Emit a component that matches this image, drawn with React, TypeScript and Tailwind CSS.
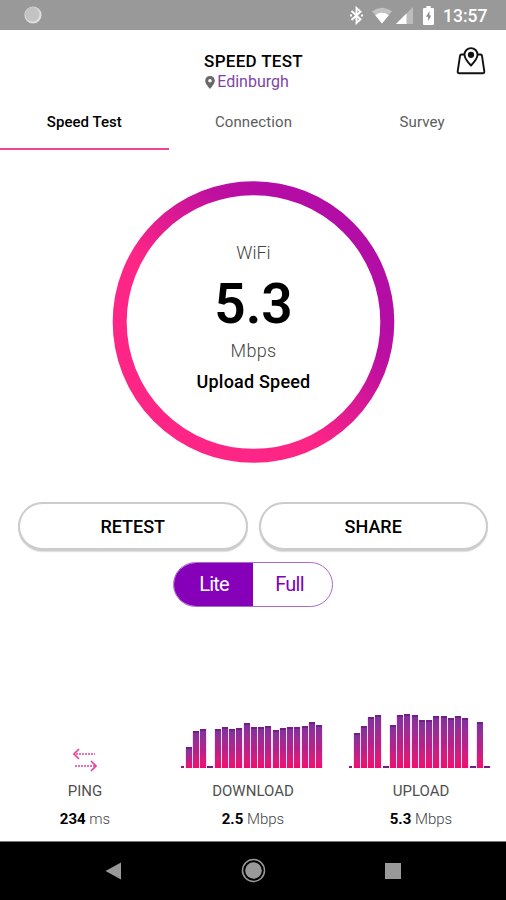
import React from 'react';

const downloadBars = [21, 37, 39, 2, 39, 41, 39.5, 40, 45.5, 41, 41, 42, 38, 40, 41.5, 41, 42.5, 46, 43];
const uploadBars = [35, 42, 51.5, 53.5, 2, 43.5, 53.5, 54.5, 53.5, 48, 48, 52, 52, 50, 52, 50, 2, 46.5, 2];

const StatusBar: React.FC = () => (
  <div className="h-[30px] bg-[#999999] flex items-center justify-between pl-6 pr-[18px]">
    <svg width="18" height="18" viewBox="0 0 18 18">
      <circle cx="9" cy="9" r="8.6" fill="#dedede" />
      <circle cx="8.3" cy="8.3" r="7.2" fill="#c3c3c3" />
    </svg>
    <div className="flex items-center text-white">
      <svg width="13" height="19" viewBox="0 0 13 19" fill="none" stroke="white" strokeWidth="1.9">
        <path d="M1.5 5 L10.5 13.3 L6.5 17 V2 L10.5 5.7 L1.5 14" />
        <path d="M0 9.5h2M11 9.5h2" />
      </svg>
      <svg className="ml-[9px]" width="20" height="17" viewBox="0 0 21 17">
        <path d="M0 4 Q10.5 -3.5 21 4 L10.5 17 Z" fill="#c2c2c2" />
        <path d="M3.4 8.2 Q10.5 3.2 17.6 8.2 L10.5 17 Z" fill="white" />
      </svg>
      <svg className="ml-[4px]" width="17" height="17" viewBox="0 0 17 17">
        <path d="M0 17 L17 0 V17 Z" fill="#bcbcbc" />
        <path d="M0 17 L10.5 6.5 V17 Z" fill="white" />
      </svg>
      <svg className="ml-[10px]" width="11" height="19" viewBox="0 0 11 19">
        <path d="M3.3 0h4.4v2H10q1 0 1 1v15q0 1-1 1H1q-1 0-1-1V3q0-1 1-1h2.3Z" fill="white" />
        <path d="M6.4 5.2 L3 10.8h2.2v4.4L8.2 9.4H6.4Z" fill="#888" />
      </svg>
      <span className="ml-[9px] w-[45px] pt-px text-[17.5px] leading-[30px] font-medium whitespace-nowrap">13:57</span>
    </div>
  </div>
);

const Header: React.FC = () => (
  <header className="h-[68px] grid grid-cols-[1fr_auto_1fr] pt-[17px] px-[20px]">
    <div />
    <div className="flex flex-col items-center">
      <h1 className="h-[28px] pl-px text-[17px] leading-[28px] font-medium text-black tracking-[0.3px]">SPEED TEST</h1>
      <div className="flex items-center -mt-[3px] mr-[12px] h-[20px]">
        <svg className="mr-[2px]" width="10" height="13" viewBox="0 0 10 13">
          <path fillRule="evenodd" d="M5 0C2.2 0 .2 2 .2 4.8.2 8 5 13 5 13s4.8-5 4.8-8.2C9.8 2 7.8 0 5 0Zm0 3a1.8 1.8 0 1 1 0 3.6A1.8 1.8 0 0 1 5 3Z" fill="#686868" />
        </svg>
        <span className="text-[16px] leading-5 text-[#7e45a2]">Edinburgh</span>
      </div>
    </div>
    <svg className="justify-self-end" width="30" height="28" viewBox="0 0 30 28" fill="none" stroke="#111" strokeWidth="1.9" strokeLinejoin="round">
      <path d="M8.6 7.5H5.5Q4.2 7.5 4 8.8L1.7 24.4Q1.5 26.3 3.3 26.3H26.7Q28.5 26.3 28.3 24.4L26 8.8Q25.8 7.5 24.5 7.5H21.4" />
      <path d="M15 18.5C11 14.5 8.5 11.5 8.5 7.6a6.5 6.5 0 0 1 13 0C21.5 11.5 19 14.5 15 18.5Z" />
      <circle cx="15" cy="7.8" r="2.2" fill="#111" />
    </svg>
  </header>
);

const Tabs: React.FC = () => (
  <nav className="h-[52px] grid grid-cols-3 text-[15px] leading-[48px] text-center text-[#5c5c5c] tracking-[0.1px]">
    <div className="border-b-2 border-[#ee4792] text-black font-medium tracking-[0.05px]">Speed Test</div>
    <div className="pl-px">Connection</div>
    <div className="pl-px">Survey</div>
  </nav>
);

const Gauge: React.FC = () => (
  <div className="mt-[30px] ml-[1px] grid justify-center">
    <svg className="col-start-1 row-start-1" width="283" height="283" viewBox="0 0 283 283">
      <defs>
        <linearGradient id="ring" gradientUnits="userSpaceOnUse" x1="212" y1="71" x2="112" y2="167">
          <stop offset="0" stopColor="#b30da5" />
          <stop offset="0.3" stopColor="#c0109f" />
          <stop offset="1" stopColor="#fd2585" />
        </linearGradient>
      </defs>
      <circle cx="141.5" cy="142" r="133.8" fill="none" stroke="url(#ring)" strokeWidth="14" />
    </svg>
    <div className="col-start-1 row-start-1 flex flex-col items-center pt-[59px]">
      <span className="text-[18px] leading-7 font-light text-[#444]">WiFi</span>
      <span className="mt-[3px] text-[55px] leading-[68px] font-semibold text-black">5.3</span>
      <span className="-mt-px text-[18px] leading-7 font-light text-[#444] tracking-[0.3px]">Mbps</span>
      <span className="mt-[3px] text-[18px] leading-7 font-medium text-black tracking-[0.2px]">Upload Speed</span>
    </div>
  </div>
);

const PillButton: React.FC<{ label: string }> = ({ label }) => (
  <button className="h-[49px] flex-1 rounded-full border-2 border-b-[3px] border-[#cccccc] bg-white text-[18px] font-medium text-black shadow-[0_1px_1px_#dddddd]">
    {label}
  </button>
);

const ModeSwitch: React.FC = () => (
  <div className="mx-auto mt-[11px] w-[160px] h-[45px] rounded-full border border-[#a96bcd] overflow-hidden grid grid-cols-2 text-[20px] leading-[43px] text-center tracking-[-0.8px]">
    <span className="bg-[#8500b8] text-white pl-px">Lite</span>
    <span className="text-[#8200b5] pr-[6px]">Full</span>
  </div>
);

const Bars: React.FC<{ heights: number[] }> = ({ heights }) => (
  <div className="flex items-end h-[58px] mr-[2px]">
    <div className="w-[2.5px] h-[2px] mr-[1.2px] bg-[#96186f]" />
    {heights.map((height, i) => (
      <div key={i} className="w-[7.25px] px-[0.6px] bg-[#f8cbe1]/60" style={{ height }}>
        <div className="h-full border-t-2 border-[#702080] bg-linear-to-b from-[#80309f] via-[#b6208a] to-[#f3086d]" />
      </div>
    ))}
  </div>
);

const PingArrows: React.FC = () => (
  <svg className="mb-[-5px]" width="24" height="25" viewBox="0 0 24 25" fill="none" stroke="#ed3d9d" strokeWidth="1.6">
    <path d="M6 1 1 6l5 5" />
    <path d="M3 6h19" strokeDasharray="2 1" />
    <path d="M18 13l5 5-5 5" />
    <path d="M2 18h20" strokeDasharray="2 1" />
  </svg>
);

const Stat: React.FC<{ label: string; value: string; unit: string; children: React.ReactNode }> = ({ label, value, unit, children }) => (
  <div className="flex flex-col items-center">
    <div className="h-[58px] flex items-end">{children}</div>
    <span className="mt-[9px] text-[15px] leading-7 text-[#505050]">{label}</span>
    <span className="text-[15px] leading-7 font-light text-[#444]">
      <b className="font-bold text-black">{value}</b> {unit}
    </span>
  </div>
);

const NavigationBar: React.FC = () => (
  <div className="h-[59px] bg-black border-t border-[#777] flex justify-between items-center pl-[105px] pr-[105px] pb-px">
    <svg width="17" height="18" viewBox="0 0 17 18"><path d="M0.5 9 16 0.5V17.5Z" fill="#999" /></svg>
    <svg width="25" height="25" viewBox="0 0 25 25">
      <circle cx="12.5" cy="12.5" r="11" fill="none" stroke="#999" strokeWidth="1.5" />
      <circle cx="12.5" cy="12.5" r="8.3" fill="#999" />
    </svg>
    <div className="size-4 bg-[#999]" />
  </div>
);

const App: React.FC = () => {
  return (
    <div className="w-[506px] h-[900px] bg-white flex flex-col overflow-hidden font-['Roboto',sans-serif]">
      <StatusBar />
      <Header />
      <Tabs />
      <Gauge />
      <div className="mt-[39px] flex gap-[11px] px-[18px]">
        <PillButton label="RETEST" />
        <PillButton label="SHARE" />
      </div>
      <ModeSwitch />
      <div className="mt-auto mb-[8px] pl-px pr-px grid grid-cols-3">
        <Stat label="PING" value="234" unit="ms"><PingArrows /></Stat>
        <Stat label="DOWNLOAD" value="2.5" unit="Mbps"><Bars heights={downloadBars} /></Stat>
        <Stat label="UPLOAD" value="5.3" unit="Mbps"><Bars heights={uploadBars} /></Stat>
      </div>
      <NavigationBar />
    </div>
  );
};

export default App;
